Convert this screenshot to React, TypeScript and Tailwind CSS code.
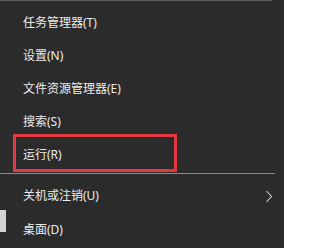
import React from 'react';

const items = ['任务管理器(T)', '设置(N)', '文件资源管理器(E)', '搜索(S)', '运行(R)'];

const MenuItem: React.FC<{ label: string; tall?: boolean; submenu?: boolean }> = ({ label, tall, submenu }) => (
  <div className={`flex items-center justify-between pl-[23px] pr-[11px] ${tall ? 'h-[34px]' : 'h-[33px]'}`}>
    <span>{label}</span>
    {submenu && (
      <svg width="8" height="13" viewBox="0 0 8 13" fill="none" className="text-[#cfcfcf]">
        <path d="M1.5 1 L6.5 6.5 L1.5 12" stroke="currentColor" strokeWidth="1.1" />
      </svg>
    )}
  </div>
);

export default function App() {
  return (
    <div
      className="relative w-[284px] h-[248px] overflow-hidden bg-[#2b2b2b] text-[12px] leading-none text-[#ebebeb]"
      style={{ fontFamily: "'Noto Sans', 'Noto Sans CJK SC', sans-serif" }}
    >
      {/* top edge of the previous separator */}
      <div className="h-px w-[272px] bg-[#5c5c5c]" />

      <div className="flex flex-col pt-[5px]">
        {items.map(label => (
          <MenuItem key={label} label={label} />
        ))}
      </div>

      <div className="mt-[2px] h-px w-[275px] bg-[#8c8c8c]" />

      <div className="flex flex-col mt-[5px]">
        <MenuItem label="关机或注销(U)" tall submenu />
        <MenuItem label="桌面(D)" tall />
      </div>

      {/* highlight annotation */}
      <div className="absolute left-[13px] top-[134px] w-[164px] h-[38px] border-[3px] border-[#e3383f]" />

      {/* desktop peeking through on the left */}
      <div className="absolute left-0 top-[210px] w-[6px] h-[22px] bg-[#d2d2d2]" />
    </div>
  );
}
